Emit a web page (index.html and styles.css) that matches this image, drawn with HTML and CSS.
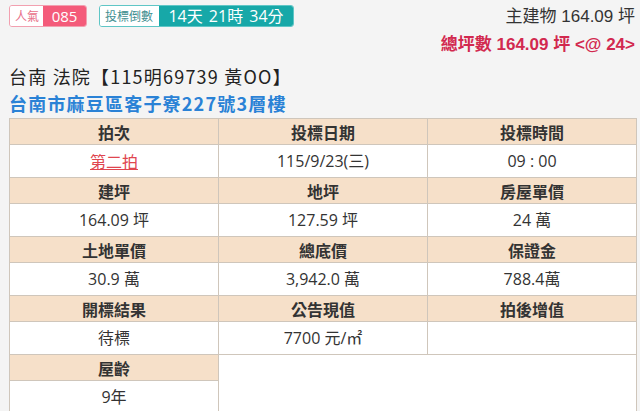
FILE: index.html
```html
<!DOCTYPE html>
<html lang="zh-Hant">
<head>
<meta charset="utf-8">
<link rel="stylesheet" href="styles.css">
</head>
<body>
<div class="page">
  <div class="top">
    <div class="badges">
      <div class="badge badge-pink"><span class="b-label">人氣</span><span class="b-value">085</span></div>
      <div class="badge badge-teal"><span class="b-label">投標倒數</span><span class="b-value">14天 21時 34分</span></div>
    </div>
    <div class="info">
      <div class="info-line">主建物 164.09 坪</div>
      <div class="info-line info-total">總坪數 164.09 坪 &lt;@ 24&gt;</div>
    </div>
  </div>
  <div class="title">台南 法院【115明69739 黃OO】</div>
  <div class="address">台南市麻豆區客子寮227號3層樓</div>
  <table class="detail">
    <tr class="hd"><th>拍次</th><th>投標日期</th><th>投標時間</th></tr>
    <tr class="dt"><td><a class="round" href="#">第二拍</a></td><td>115/9/23(三)</td><td>09 : 00</td></tr>
    <tr class="hd"><th>建坪</th><th>地坪</th><th>房屋單價</th></tr>
    <tr class="dt"><td>164.09 坪</td><td>127.59 坪</td><td>24 萬</td></tr>
    <tr class="hd"><th>土地單價</th><th>總底價</th><th>保證金</th></tr>
    <tr class="dt"><td>30.9 萬</td><td>3,942.0 萬</td><td>788.4萬</td></tr>
    <tr class="hd"><th>開標結果</th><th>公告現值</th><th>拍後增值</th></tr>
    <tr class="dt"><td>待標</td><td>7700 元/㎡</td><td></td></tr>
    <tr class="hd"><th>屋齡</th><td class="empty" colspan="2" rowspan="2"></td></tr>
    <tr class="dt"><td>9年</td></tr>
  </table>
</div>
</body>
</html>
```

FILE: styles.css
```css
* { box-sizing: border-box; }
html, body { margin: 0; padding: 0; }
body {
  background: #f4f4f4;
  color: #333;
  font-family: "Noto Sans CJK TC", "Noto Sans", sans-serif;
  width: 640px;
  height: 411px;
  overflow: hidden;
}
.page { padding: 3px 4px 0 9px; }
.top { display: flex; justify-content: space-between; align-items: flex-start; }
.badges { display: flex; gap: 12px; padding-top: 2px; }
.badge {
  display: flex;
  height: 22px;
  border-radius: 3px;
  overflow: hidden;
  border: 1px solid;
}
.b-label {
  background: #fff;
  font-size: 12px;
  line-height: 20px;
  padding: 0 5px;
}
.b-value {
  color: #fff;
  line-height: 20px;
  font-family: "Open Sans", "Noto Sans CJK TC", sans-serif;
}
.badge-pink { border-color: #f2a0b0; }
.badge-pink .b-label { color: #e8708a; width: 33px; padding: 0 0 0 5px; }
.badge-pink .b-value { background: #f45b7a; font-size: 15px; width: 43px; text-align: center; }
.badge-teal { border-color: #5fc6c6; }
.badge-teal .b-label { color: #3f8f91; width: 59px; padding: 0 0 0 5px; }
.badge-teal .b-value { background: #17a8a8; font-size: 16px; width: 134px; text-align: center; word-spacing: 2px; }
.info { text-align: right; padding-right: 1px; }
.info-line {
  font-family: "Liberation Sans", "Noto Sans CJK TC", sans-serif;
  font-size: 17px;
  line-height: 28px;
  color: #333;
}
.info-total { color: #d2294f; font-weight: bold; }
.title {
  margin-top: 4px;
  font-size: 18px;
  line-height: 27px;
  letter-spacing: 1.2px;
  color: #222;
}
.address {
  font-size: 18px;
  line-height: 26px;
  letter-spacing: 1.2px;
  font-weight: bold;
  color: #2a82d6;
}
.detail {
  margin-top: 2px;
  width: 628px;
  border-collapse: collapse;
  table-layout: fixed;
  background: #fff;
  border: 1px solid #bdb4aa;
  font-size: 16px;
}
.detail th, .detail td {
  border: 1px solid #cfc6bb;
  text-align: center;
  padding: 0;
}
.detail tr.hd { height: 26px; }
.detail tr.dt { height: 33px; }
.detail th {
  background: #f6e0c9;
  font-weight: bold;
  color: #333;
  line-height: 20px;
}
.detail td {
  color: #333;
  line-height: 20px;
  font-family: "Open Sans", "Noto Sans CJK TC", sans-serif;
}
.detail td.empty { background: #fff; }
.round { color: #e0464f; text-decoration: underline; font-family: "Noto Sans CJK TC", sans-serif; }
```
